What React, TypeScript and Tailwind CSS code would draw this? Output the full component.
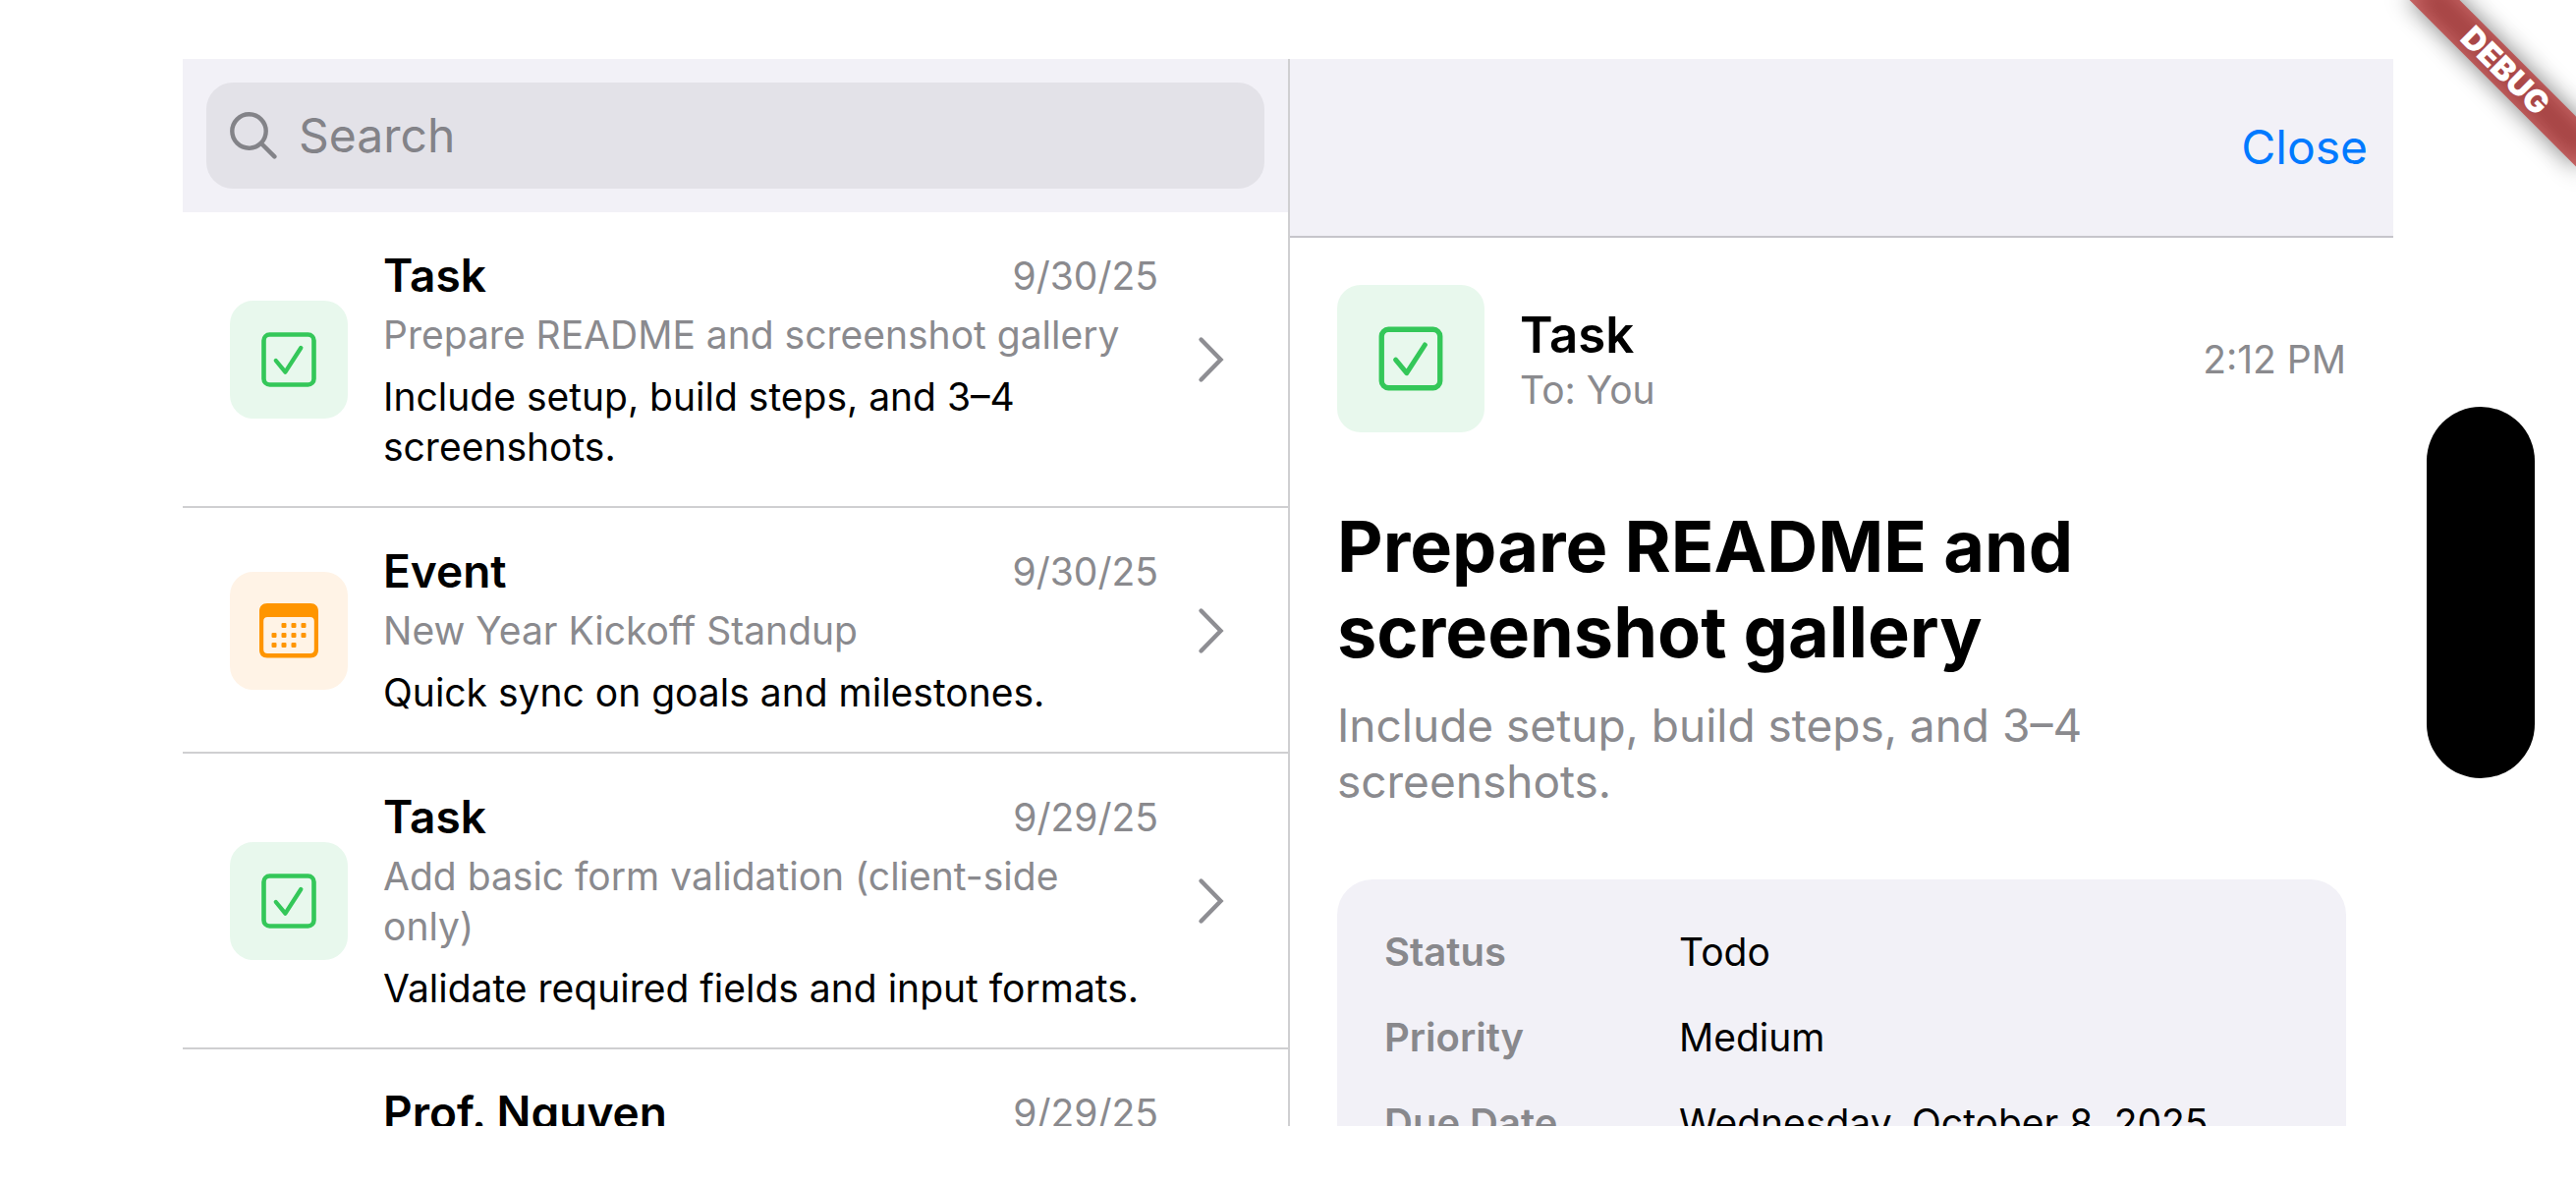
import type { ReactNode } from "react";

function SearchIcon() {
  return (
    <svg className="size-12 shrink-0" viewBox="0 0 48 48" fill="none" stroke="#838388" strokeWidth="4.4" strokeLinecap="round" aria-hidden="true">
      <circle cx="19.5" cy="19.5" r="17.2" />
      <path d="M32.5 32.5 45.4 45.4" />
    </svg>
  );
}

function TaskIcon({ className }: { className: string }) {
  return (
    <svg className={className} viewBox="0 0 60 60" fill="none" stroke="#34c759" strokeWidth="4.6" strokeLinecap="round" strokeLinejoin="round" aria-hidden="true">
      <rect x="4.5" y="4.5" width="51" height="51" rx="6" />
      <path d="M16.8 31 26.4 42.6 42.3 18" strokeWidth="4.3" />
    </svg>
  );
}

const calendarDots = [
  [25, 24.4], [35, 24.4], [45, 24.4],
  [15, 34.4], [25, 34.4], [35, 34.4], [45, 34.4],
  [15, 44.4], [25, 44.4], [35, 44.4],
];

function CalendarIcon() {
  return (
    <svg className="size-[60px]" viewBox="0 0 60 60" fill="#ff9500" aria-hidden="true">
      <path
        fillRule="evenodd"
        d="M8 2H52C57 2 60 5 60 10V49.500C60 54.500 57 57.500 52 57.500H8C3 57.500 0 54.500 0 49.500V10C0 5 3 2 8 2ZM8.200 16C5.700 16 4.200 17.500 4.200 20V49C4.200 51.500 5.700 53 8.200 53H51.800C54.300 53 55.800 51.500 55.800 49V20C55.800 17.500 54.300 16 51.800 16Z"
      />
      {calendarDots.map(([x, y]) => (
        <rect key={`${x}-${y}`} x={x - 2.5} y={y - 2.5} width="5" height="5" rx="1.2" />
      ))}
    </svg>
  );
}

function Chevron() {
  return (
    <svg className="size-[60px] shrink-0" viewBox="0 0 60 60" fill="none" stroke="#8e8e93" strokeWidth="4.4" strokeLinecap="round" aria-hidden="true">
      <path d="M19.500 9.500 39.500 30 19.500 50.500" />
    </svg>
  );
}

type Item = { title: string; date: string; subject: string; body: string; kind: "task" | "event" | "mail" };

const items: Item[] = [
  { title: "Task", date: "9/30/25", subject: "Prepare README and screenshot gallery", body: "Include setup, build steps, and 3–4 screenshots.", kind: "task" },
  { title: "Event", date: "9/30/25", subject: "New Year Kickoff Standup", body: "Quick sync on goals and milestones.", kind: "event" },
  { title: "Task", date: "9/29/25", subject: "Add basic form validation (client-side only)", body: "Validate required fields and input formats.", kind: "task" },
  { title: "Prof. Nguyen", date: "9/29/25", subject: "", body: "", kind: "mail" },
];

function Row({ item }: { item: Item }) {
  return (
    <li className="border-b-2 border-[#cfcfd1]">
      <button type="button" className="flex w-full items-center px-12 pt-9 pb-[35px] text-left">
        <span className="mr-9 flex size-[120px] shrink-0 items-center justify-center">
          {item.kind === "task" && (
            <span className="flex size-full items-center justify-center rounded-3xl bg-[#e8f8ed]">
              <TaskIcon className="size-[60px]" />
            </span>
          )}
          {item.kind === "event" && (
            <span className="flex size-full items-center justify-center rounded-3xl bg-[#fff3e6]">
              <CalendarIcon />
            </span>
          )}
        </span>
        <span className="flex min-w-0 flex-1 flex-col">
          <span className="flex items-center justify-between">
            <span className="text-[46px] leading-[57px] font-semibold">{item.title}</span>
            <span className="text-[39px] leading-[51px] text-[#8a8a8e]">{item.date}</span>
          </span>
          <span className="mt-1.5 min-h-[51px] text-[39px] leading-[51px] text-[#8a8a8e]">{item.subject}</span>
          <span className="mt-3 min-h-[51px] text-[39px] leading-[51px]">{item.body}</span>
        </span>
        <span className="ml-6 flex">
          <Chevron />
        </span>
      </button>
    </li>
  );
}

function Detail({ label, children }: { label: string; children: ReactNode }) {
  return (
    <div className="flex text-[39px] leading-[51px]">
      <dt className="w-[300px] shrink-0 text-[40px] font-semibold text-[#88888c]">{label}</dt>
      <dd>{children}</dd>
    </div>
  );
}

export default function App() {
  return (
    <div className="relative grid h-screen grid-cols-2 overflow-hidden bg-white px-[186px] py-[60px] font-['Inter','Liberation_Sans',sans-serif] text-black">
      <aside className="flex min-h-0 min-w-0 flex-col overflow-hidden">
        <div className="bg-[#f2f1f7] p-6">
          <label className="flex h-[108px] items-center rounded-[27px] bg-[#e3e2e8] px-6">
            <SearchIcon />
            <input type="search" aria-label="Search" placeholder="Search" className="ml-[22px] min-w-0 flex-1 bg-transparent text-[48px] leading-[60px] outline-none placeholder:text-[#838388]" />
          </label>
        </div>
        <ul className="min-h-0 flex-1 overflow-hidden">
          {items.map((item, i) => (
            <Row key={i} item={item} />
          ))}
        </ul>
      </aside>

      <main className="flex min-h-0 min-w-0 flex-col overflow-hidden border-l-2 border-[#cfcfd1]">
        <header className="flex h-[182px] shrink-0 items-center justify-end border-b-2 border-[#c6c5cb] bg-[#f2f1f7] px-[26px]">
          <button type="button" className="text-[48px] leading-[60px] text-[#007aff]">Close</button>
        </header>
        <div className="min-h-0 flex-1 overflow-hidden p-12">
          <div className="flex items-center">
            <span className="mr-9 flex size-[150px] items-center justify-center rounded-3xl bg-[#e8f8ed]">
              <TaskIcon className="size-[70px]" />
            </span>
            <div className="flex-1">
              <p className="text-[51px] leading-[63px] font-semibold">Task</p>
              <p className="text-[39px] leading-[49px] text-[#8a8a8e]">To: You</p>
            </div>
            <time className="text-[39px] leading-[51px] text-[#8a8a8e]">2:12 PM</time>
          </div>
          <h1 className="mt-18 text-[72px] leading-[87px] font-bold">Prepare README and screenshot gallery</h1>
          <p className="mt-6 text-[46px] leading-[57px] text-[#8a8a8e]">Include setup, build steps, and 3–4 screenshots.</p>
          <dl className="mt-[71px] flex flex-col gap-9 rounded-[36px] bg-[#f2f1f7] p-12">
            <Detail label="Status">Todo</Detail>
            <Detail label="Priority">Medium</Detail>
            <Detail label="Due Date">Wednesday, October 8, 2025</Detail>
          </dl>
        </div>
      </main>

      <div className="absolute top-1/2 right-[42px] h-[378px] w-[110px] -translate-y-1/2 rounded-full bg-black" />

      <div className="pointer-events-none absolute top-0 right-0 size-[240px] overflow-hidden">
        <div className="absolute top-[54px] -right-12 h-9 w-[240px] rotate-45">
          <div className="absolute inset-0 bg-black/50 blur-[12px]" />
          <div className="absolute inset-0 flex items-center justify-center bg-[#b71c1c]/63 text-[32px] leading-9 font-black text-white">DEBUG</div>
        </div>
      </div>
    </div>
  );
}
